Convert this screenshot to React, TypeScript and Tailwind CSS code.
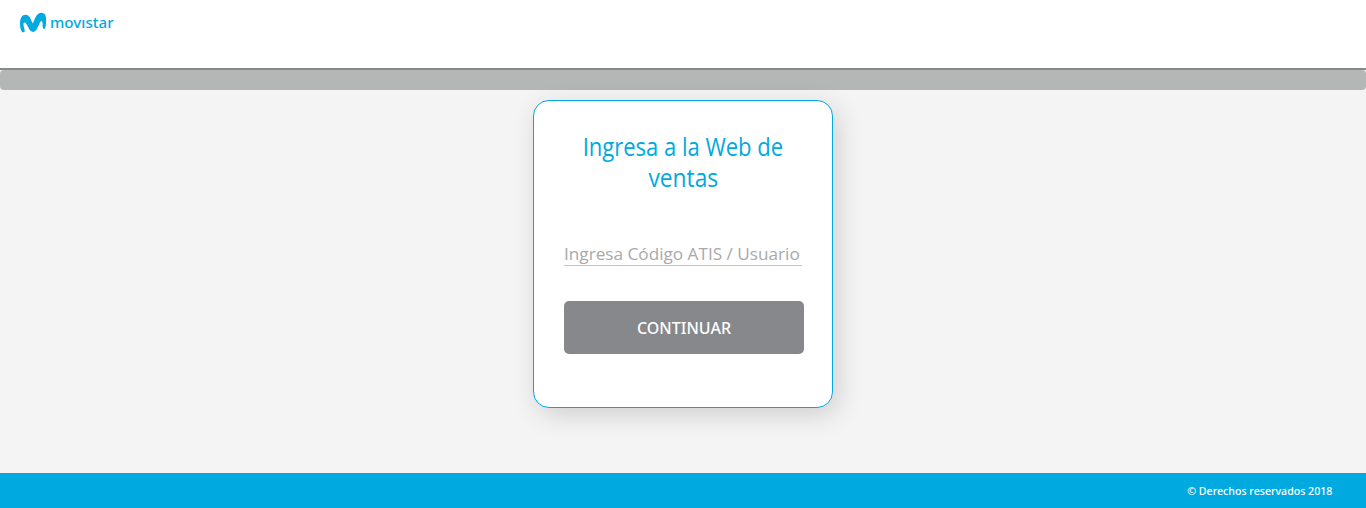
export default function App() {
  return (
    <div className="flex h-[508px] flex-col overflow-hidden bg-[#f4f4f4] font-['Open_Sans',sans-serif]">
      <header className="flex h-[70px] shrink-0 items-start border-b-2 border-[#86888c] bg-white pt-3 pl-5">
        <div className="flex items-start text-[#00a9e0]">
          <svg className="h-[21px] w-[27px] shrink-0" viewBox="0 0 27 21" fill="currentColor" aria-hidden="true">
            <path d="M3.2 20.3C1.4 20.3 0 16.6 0 11.5C0 6 2.2 2.8 5.6 2.8C9.3 2.8 11 7.4 12.8 11.6C14.6 7.6 16.4 .8 21.4 .8C25.2 .8 26.3 4.4 26.1 8.6C26 12 25.9 17 24.1 17C22.2 17 22.8 12.6 22.5 10.6C22.2 8.8 21.4 8.6 20.8 9.3C18.6 11.8 17.2 19.9 13.2 19.9C9 19.9 7.6 12 5.3 10.7C4 10 3.3 11 3.5 12.7C3.8 15.5 4.9 17.2 4.7 19.2C4.6 20 4 20.3 3.2 20.3Z" />
          </svg>
          <span className="ml-[3px] w-[64px] font-['Noto_Sans',sans-serif] text-[15px] leading-[20px] font-medium">
            <span className="inline-block origin-left scale-x-[1.01] whitespace-nowrap">movıstar</span>
          </span>
        </div>
      </header>
      <div className="h-5 shrink-0 rounded bg-[#b5b7b6]" />
      <main className="flex flex-1 justify-center pt-2.5">
        <section className="flex h-[308px] w-[300px] flex-col rounded-[16px] border border-[#00a9e0] bg-white px-[30px] pt-[30px] shadow-[5px_7px_26px_0_rgba(0,0,0,0.15)]">
          <h1 className="flex flex-col items-center text-[25px] leading-[31px] text-[#00a9e0]">
            <span className="origin-center scale-x-[0.88] whitespace-nowrap">Ingresa a la Web de</span>
            <span className="origin-center scale-x-[0.91]">ventas</span>
          </h1>
          <div className="mt-[47px] h-[26px] w-[238px] border-b border-[#c4c4c4] text-[17px] leading-[28px] text-[#a9a9a9]">
            <span className="inline-block origin-left scale-x-[1.01] whitespace-nowrap">Ingresa Código ATIS / Usuario</span>
          </div>
          <button className="mt-[35px] flex h-[53px] w-60 shrink-0 items-center justify-center rounded-[5px] bg-[#86888c] font-['Noto_Sans',sans-serif] text-[17px] text-white">
            <span className="scale-x-[0.94] font-medium">CONTINUAR</span>
          </button>
        </section>
      </main>
      <footer className="flex h-[35px] shrink-0 items-center justify-end bg-[#00a9e0] pt-0.5 pr-[34px] font-['Noto_Sans',sans-serif] text-[11px] font-medium text-white">
        <span className="origin-right scale-x-[0.965]">© Derechos reservados 2018</span>
      </footer>
    </div>
  );
}
